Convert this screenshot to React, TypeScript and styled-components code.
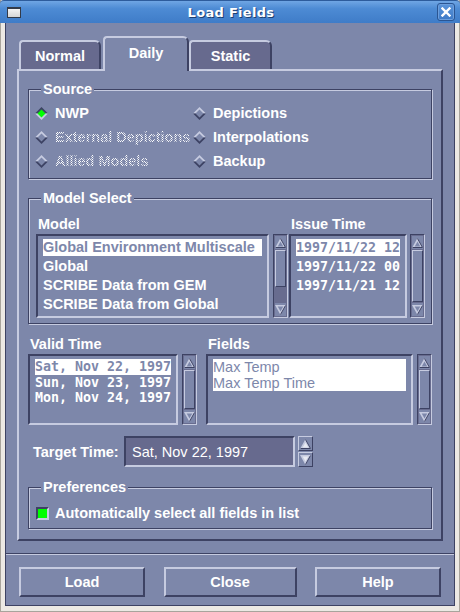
import React from "react";
import styled, { createGlobalStyle, css } from "styled-components";

const C = {
  bg: "#7d87aa",
  dark: "#3d4263",
  light: "#c6cbe0",
  tab: "#676a8e",
  trough: "#686c8f",
  frame: "#ece9e4",
  green: "#00ff00",
};

const FS = "14.5px";

const Global = createGlobalStyle`
  html, body { margin: 0; padding: 0; background: ${C.frame}; }
  body { font-family: "Liberation Sans", Arial, sans-serif; }
  * { box-sizing: border-box; }
`;

const Window = styled.div`
  width: 460px;
  height: 612px;
  display: flex;
  flex-direction: column;
  background: ${C.frame};
  border-left: 1px solid #a8a49c;
  border-right: 1px solid #a8a49c;
  border-bottom: 1px solid #a8a49c;
`;

const TitleBar = styled.div`
  height: 23px;
  flex: 0 0 23px;
  margin: 0 -1px;
  display: grid;
  grid-template-columns: 1fr auto 1fr;
  align-items: center;
  padding: 0 5px 0 7px;
  border-top: 1px solid #2d5c9c;
  border-radius: 4px 4px 0 0;
  background: linear-gradient(to bottom, #6fa6e4 0%, #4d8bd4 35%, #3f7cc8 100%);
`;

const WinIcon = styled.div`
  justify-self: start;
  width: 14px;
  height: 11px;
  border: 1px solid #333a48;
  border-top-width: 2px;
  background: linear-gradient(to bottom, #f4f4f4, #d6d6d6);
`;

const Title = styled.div`
  font-family: "DejaVu Sans", "Liberation Sans", sans-serif;
  font-weight: bold;
  font-size: 13px;
  letter-spacing: 0.3px;
  color: #ffffff;
  text-shadow: 1px 1px 0 #1d3f70;
`;

const CloseBtn = styled.div`
  justify-self: end;
  width: 18px;
  height: 18px;
  border: 1px solid #2a5592;
  border-radius: 3px;
  box-shadow: inset 0 0 0 1px #6c9edc;
  background: linear-gradient(to bottom, #5a94da, #3e7ac6);
  display: flex;
  align-items: center;
  justify-content: center;
`;

const Frame = styled.div`
  flex: 1;
  display: flex;
  padding: 0 4px 5px 4px;
`;

const Body = styled.div`
  flex: 1;
  display: flex;
  flex-direction: column;
  background: ${C.bg};
  border: 1px solid ${C.dark};
  border-top: none;
`;

const TabArea = styled.div`
  padding: 13px 11px 0 11px;
  display: flex;
  flex-direction: column;
`;

const TabRow = styled.div`
  height: 33px;
  display: flex;
  align-items: flex-end;
  padding-left: 2px;
  position: relative;
  z-index: 1;
`;

const Tab = styled.div<{ $w: number; $active?: boolean }>`
  width: ${(p) => p.$w}px;
  height: 29px;
  display: flex;
  align-items: center;
  justify-content: center;
  font-weight: bold;
  font-size: ${FS};
  color: #ffffff;
  background: ${C.tab};
  border-top: 2px solid ${C.light};
  border-left: 2px solid ${C.light};
  border-right: 2px solid ${C.dark};
  border-radius: 4px 6px 0 0;
  ${(p) =>
    p.$active &&
    css`
      height: 35px;
      margin-bottom: -2px;
      padding-bottom: 3px;
      background: ${C.bg};
    `}
  &:first-child {
    margin-right: 2px;
  }
`;

const Panel = styled.div`
  width: 426px;
  height: 472px;
  border: 2px solid;
  border-color: ${C.light} ${C.dark} ${C.dark} ${C.light};
  padding: 0 9px;
  display: flex;
  flex-direction: column;
`;

const Group = styled.div<{ $mt: number; $h: number }>`
  position: relative;
  margin-top: ${(p) => p.$mt}px;
  height: ${(p) => p.$h}px;
  border: 1px solid ${C.dark};
  box-shadow: inset 1px 1px 0 ${C.light}, 1px 1px 0 ${C.light};
`;

const Legend = styled.div`
  position: absolute;
  top: -9px;
  left: 12px;
  padding: 0 2px;
  background: ${C.bg};
  font-weight: bold;
  font-size: ${FS};
  line-height: 16px;
  color: #ffffff;
`;

const RadioGrid = styled.div`
  display: grid;
  grid-template-columns: 158px 1fr;
  grid-auto-rows: 24px;
  padding: 11px 0 0 6px;
`;

const RadioItem = styled.div`
  display: flex;
  align-items: center;
  gap: 7px;
`;

const Label = styled.span<{ $disabled?: boolean }>`
  font-weight: bold;
  font-size: ${FS};
  line-height: 16px;
  color: #ffffff;
  white-space: nowrap;
  ${(p) =>
    p.$disabled &&
    css`
      color: transparent;
      background-image: repeating-conic-gradient(#ffffff 0% 25%, transparent 0% 50%);
      background-size: 2px 2px;
      -webkit-background-clip: text;
      background-clip: text;
    `}
`;

const TargetLabel = styled(Label)`
  flex: 0 0 91px;
`;

const ModelInner = styled.div`
  display: flex;
  padding: 17px 7px 0 7px;
`;

const Column = styled.div<{ $w: number; $ml?: number }>`
  width: ${(p) => p.$w}px;
  margin-left: ${(p) => p.$ml ?? 0}px;
  display: flex;
  flex-direction: column;
`;

const ColLabel = styled.div`
  height: 16px;
  margin-bottom: 2px;
  padding-left: 2px;
  font-weight: bold;
  font-size: ${FS};
  line-height: 16px;
  color: #ffffff;
  white-space: nowrap;
`;

const ListRow = styled.div<{ $gap: number }>`
  display: flex;
  gap: ${(p) => p.$gap}px;
`;

const ListBox = styled.div<{ $w: number; $h: number }>`
  width: ${(p) => p.$w}px;
  height: ${(p) => p.$h}px;
  border: 2px solid;
  border-color: ${C.dark} ${C.light} ${C.light} ${C.dark};
  padding: 3px 0 0 0;
  overflow: hidden;
`;

const Item = styled.div<{ $sel?: boolean; $mono?: boolean; $plain?: boolean; $h: number; $gap?: number }>`
  height: ${(p) => p.$h}px;
  line-height: ${(p) => p.$h}px;
  margin: 0 5px ${(p) => p.$gap ?? 0}px 5px;
  white-space: nowrap;
  color: ${(p) => (p.$sel ? C.bg : "#ffffff")};
  background: ${(p) => (p.$sel ? "#ffffff" : "transparent")};
  font-size: ${FS};
  font-weight: ${(p) => (p.$plain ? "normal" : "bold")};
  ${(p) =>
    p.$mono &&
    css`
      font-family: "DejaVu Sans Mono", "Liberation Mono", monospace;
      font-size: 13.3px;
      font-weight: bold;
    `}
`;

const Scroll = styled.div<{ $h: number }>`
  width: 15px;
  height: ${(p) => p.$h}px;
  display: flex;
  flex-direction: column;
  border: 1px solid;
  border-color: ${C.dark} ${C.light} ${C.light} ${C.dark};
  background: ${C.trough};
  padding: 1px;
`;

const ArrowBtn = styled.div`
  flex: 0 0 13px;
  display: flex;
  align-items: center;
  justify-content: center;
  background: ${C.bg};
`;

const Trough = styled.div`
  flex: 1;
  display: flex;
  flex-direction: column;
  padding: 1px 0;
`;

const Thumb = styled.div`
  background: ${C.bg};
  border: 1px solid;
  border-color: ${C.light} ${C.dark} ${C.dark} ${C.light};
`;

const ListsSection = styled.div`
  display: flex;
  margin-top: 12px;
`;

const TargetRow = styled.div`
  margin-top: 11px;
  height: 31px;
  display: flex;
  align-items: center;
  padding-left: 5px;
`;

const TargetInput = styled.div`
  width: 171px;
  height: 31px;
  border: 2px solid;
  border-color: ${C.dark} ${C.light} ${C.light} ${C.dark};
  background: ${C.tab};
  padding-left: 6px;
  display: flex;
  align-items: center;
  font-size: ${FS};
  color: #ffffff;
  white-space: nowrap;
`;

const Spin = styled.div`
  margin-left: 3px;
  height: 31px;
  display: flex;
  flex-direction: column;
  gap: 1px;
`;

const SpinBtn = styled.div`
  width: 15px;
  height: 15px;
  background: ${C.bg};
  border: 1px solid;
  border-color: ${C.light} ${C.dark} ${C.dark} ${C.light};
  display: flex;
  align-items: center;
  justify-content: center;
`;

const PrefRow = styled.div`
  display: flex;
  align-items: center;
  gap: 6px;
  padding: 17px 0 0 7px;
  height: 33px;
`;

const CheckBox = styled.div`
  width: 13px;
  height: 13px;
  border: 2px solid;
  border-color: ${C.dark} ${C.light} ${C.light} ${C.dark};
  background: ${C.green};
`;

const Separator = styled.div`
  margin-top: 12px;
  height: 2px;
  border-top: 1px solid ${C.dark};
  border-bottom: 1px solid ${C.light};
`;

const ButtonRow = styled.div`
  margin-top: 12px;
  padding: 0 13px;
  display: flex;
  justify-content: space-between;
`;

const Button = styled.div<{ $w: number }>`
  width: ${(p) => p.$w}px;
  height: 30px;
  border: 2px solid;
  border-color: ${C.light} ${C.dark} ${C.dark} ${C.light};
  background: ${C.bg};
  display: flex;
  align-items: center;
  justify-content: center;
  font-weight: bold;
  font-size: ${FS};
  color: #ffffff;
`;

const Diamond = ({ on }: { on?: boolean }) => (
  <svg width="13" height="13" viewBox="0 0 13 13">
    <polygon points="0,6.5 6.5,0 13,6.5" fill={on ? C.dark : C.light} />
    <polygon points="0,6.5 6.5,13 13,6.5" fill={on ? C.light : C.dark} />
    <polygon points="2.5,6.5 6.5,2.5 10.5,6.5 6.5,10.5" fill={on ? C.green : C.bg} />
  </svg>
);

const Arrow = ({ dir, solid }: { dir: "up" | "down"; solid?: boolean }) => {
  const inner = solid ? "#e8eaf2" : C.bg;
  return (
    <svg width="11" height="10" viewBox="0 0 11 10" style={{ display: "block" }}>
      {dir === "up" ? (
        <>
          <polygon points="5.5,0 11,10 0,10" fill={C.light} />
          <polyline points="5.5,0.5 10.5,9.5 0.5,9.5" fill="none" stroke={C.dark} strokeWidth="1" />
          <polygon points="5.5,3.5 8.3,8.5 2.7,8.5" fill={inner} />
        </>
      ) : (
        <>
          <polygon points="0,0 11,0 5.5,10" fill={C.light} />
          <polyline points="10.5,0.5 5.5,9.5" fill="none" stroke={C.dark} strokeWidth="1" />
          <polygon points="2.7,1.5 8.3,1.5 5.5,6.5" fill={inner} />
        </>
      )}
    </svg>
  );
};

const ScrollBar = ({ h, thumb }: { h: number; thumb: number }) => (
  <Scroll $h={h}>
    <ArrowBtn>
      <Arrow dir="up" />
    </ArrowBtn>
    <Trough>
      <Thumb style={{ flex: `0 0 ${thumb * 100}%` }} />
    </Trough>
    <ArrowBtn>
      <Arrow dir="down" />
    </ArrowBtn>
  </Scroll>
);

export default function App() {
  return (
    <>
      <Global />
      <Window>
        <TitleBar>
          <WinIcon />
          <Title>Load Fields</Title>
          <CloseBtn>
            <svg width="10" height="10" viewBox="0 0 10 10">
              <path d="M1.5 1.5 L8.5 8.5 M8.5 1.5 L1.5 8.5" stroke="#ffffff" strokeWidth="2.4" strokeLinecap="square" />
            </svg>
          </CloseBtn>
        </TitleBar>
        <Frame>
          <Body>
            <TabArea>
              <TabRow>
                <Tab $w={82}>Normal</Tab>
                <Tab $w={86} $active>
                  Daily
                </Tab>
                <Tab $w={83}>Static</Tab>
              </TabRow>
              <Panel>
                <Group $mt={18} $h={90}>
                  <Legend>Source</Legend>
                  <RadioGrid>
                    <RadioItem>
                      <Diamond on />
                      <Label>NWP</Label>
                    </RadioItem>
                    <RadioItem>
                      <Diamond />
                      <Label>Depictions</Label>
                    </RadioItem>
                    <RadioItem>
                      <Diamond />
                      <Label $disabled>External Depictions</Label>
                    </RadioItem>
                    <RadioItem>
                      <Diamond />
                      <Label>Interpolations</Label>
                    </RadioItem>
                    <RadioItem>
                      <Diamond />
                      <Label $disabled>Allied Models</Label>
                    </RadioItem>
                    <RadioItem>
                      <Diamond />
                      <Label>Backup</Label>
                    </RadioItem>
                  </RadioGrid>
                </Group>

                <Group $mt={19} $h={126}>
                  <Legend>Model Select</Legend>
                  <ModelInner>
                    <Column $w={252}>
                      <ColLabel>Model</ColLabel>
                      <ListRow $gap={4}>
                        <ListBox $w={233} $h={84}>
                          <Item $h={17} $gap={2} $sel>Global Environment Multiscale</Item>
                          <Item $h={17} $gap={2}>Global</Item>
                          <Item $h={17} $gap={2}>SCRIBE Data from GEM</Item>
                          <Item $h={17} $gap={2}>SCRIBE Data from Global</Item>
                        </ListBox>
                        <ScrollBar h={84} thumb={0.72} />
                      </ListRow>
                    </Column>
                    <Column $w={136} $ml={1}>
                      <ColLabel>Issue Time</ColLabel>
                      <ListRow $gap={3}>
                        <ListBox $w={118} $h={84}>
                          <Item $h={17} $gap={2} $mono $sel>1997/11/22 12</Item>
                          <Item $h={17} $gap={2} $mono>1997/11/22 00</Item>
                          <Item $h={17} $gap={2} $mono>1997/11/21 12</Item>
                        </ListBox>
                        <ScrollBar h={84} thumb={1} />
                      </ListRow>
                    </Column>
                  </ModelInner>
                </Group>

                <ListsSection>
                  <Column $w={169}>
                    <ColLabel>Valid Time</ColLabel>
                    <ListRow $gap={4}>
                      <ListBox $w={150} $h={71}>
                        <Item $h={16} $mono $sel style={{ marginBottom: -0.5 }}>Sat, Nov 22, 1997</Item>
                        <Item $h={16} $mono style={{ marginBottom: -0.5 }}>Sun, Nov 23, 1997</Item>
                        <Item $h={16} $mono>Mon, Nov 24, 1997</Item>
                      </ListBox>
                      <ScrollBar h={71} thumb={1} />
                    </ListRow>
                  </Column>
                  <Column $w={226} $ml={9}>
                    <ColLabel>Fields</ColLabel>
                    <ListRow $gap={4}>
                      <ListBox $w={207} $h={71}>
                        <Item $h={16} $plain $sel>Max Temp</Item>
                        <Item $h={16} $plain $sel>Max Temp Time</Item>
                      </ListBox>
                      <ScrollBar h={71} thumb={1} />
                    </ListRow>
                  </Column>
                </ListsSection>

                <TargetRow>
                  <TargetLabel>Target Time:</TargetLabel>
                  <TargetInput>Sat, Nov 22, 1997</TargetInput>
                  <Spin>
                    <SpinBtn>
                      <Arrow dir="up" solid />
                    </SpinBtn>
                    <SpinBtn>
                      <Arrow dir="down" solid />
                    </SpinBtn>
                  </Spin>
                </TargetRow>

                <Group $mt={20} $h={42}>
                  <Legend>Preferences</Legend>
                  <PrefRow>
                    <CheckBox />
                    <Label>Automatically select all fields in list</Label>
                  </PrefRow>
                </Group>
              </Panel>
            </TabArea>
            <Separator />
            <ButtonRow>
              <Button $w={126}>Load</Button>
              <Button $w={133}>Close</Button>
              <Button $w={126}>Help</Button>
            </ButtonRow>
          </Body>
        </Frame>
      </Window>
    </>
  );
}
